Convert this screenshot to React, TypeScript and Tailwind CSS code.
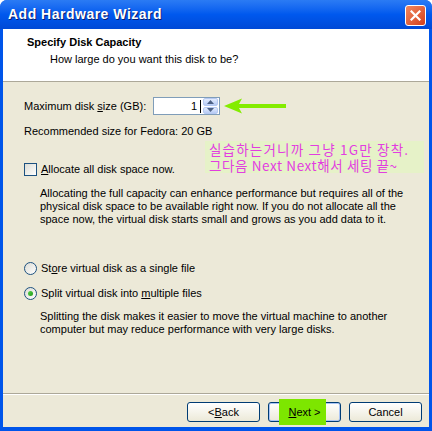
import React from "react";

function ArrowMark() {
  return (
    <svg width="66" height="16" viewBox="0 0 66 16" className="ml-[2px]">
      <path d="M2 8 L20 0.5 L17 6 L64 6 L64 10 L17 10 L20 15.5 Z" fill="#84ec00" />
    </svg>
  );
}

function Spinner() {
  return (
    <div className="flex flex-col w-[15px] h-[16px] gap-[1px] mr-[1px]">
      <div className="flex-1 flex items-center justify-center rounded-[2px] bg-gradient-to-b from-[#e3ecfd] to-[#b7cbf5] border border-[#b6c9f2]">
        <svg width="7" height="4" viewBox="0 0 7 4"><path d="M0 4 L3.5 0 L7 4 Z" fill="#4d6185" /></svg>
      </div>
      <div className="flex-1 flex items-center justify-center rounded-[2px] bg-gradient-to-b from-[#e3ecfd] to-[#b7cbf5] border border-[#b6c9f2]">
        <svg width="7" height="4" viewBox="0 0 7 4"><path d="M0 0 L3.5 4 L7 0 Z" fill="#4d6185" /></svg>
      </div>
    </div>
  );
}

function Radio({ checked }: { checked?: boolean }) {
  return (
    <div className="w-[13px] h-[13px] rounded-full border border-[#1c5180] bg-gradient-to-br from-[#dcdcd4] to-white flex items-center justify-center">
      {checked && <div className="w-[5px] h-[5px] rounded-full bg-gradient-to-br from-[#55d34a] to-[#1f9a17]" />}
    </div>
  );
}

function XpButton({ children, primary }: { children: React.ReactNode; primary?: boolean }) {
  return (
    <button
      className={
        "relative w-[73px] h-[20px] rounded-[3px] border border-[#003c74] bg-gradient-to-b from-white to-[#ece9d8] text-[11px] text-black flex items-center justify-center " +
        (primary ? "shadow-[inset_0_0_0_1px_#a9c4f5]" : "")
      }
    >
      {children}
    </button>
  );
}

export default function App() {
  return (
    <div className="w-[432px] h-[431px] flex flex-col bg-[#0055ea] rounded-t-[7px] overflow-hidden font-['Liberation_Sans',Arial,sans-serif] text-[11px] text-black">
      {/* title bar */}
      <div className="h-[29px] flex items-center justify-between pl-[8px] pr-[6px] bg-gradient-to-b from-[#2b7bf4] via-[#0058ee] to-[#0049d6]">
        <span className="text-white font-bold text-[14px] tracking-[0.5px] [text-shadow:1px_1px_0_#0a1e6e]">Add Hardware Wizard</span>
        <div className="w-[21px] h-[21px] rounded-[3px] border border-white bg-gradient-to-br from-[#f0875f] to-[#d43d16] flex items-center justify-center mt-[1px]">
          <svg width="11" height="11" viewBox="0 0 11 11">
            <path d="M1.5 1.5 L9.5 9.5 M9.5 1.5 L1.5 9.5" stroke="white" strokeWidth="2.2" strokeLinecap="square" />
          </svg>
        </div>
      </div>

      <div className="flex-1 mx-[3px] mb-[4px] bg-[#ece9d8] flex flex-col">
        {/* header */}
        <div className="h-[53px] bg-white border-b border-[#aca899] pl-[24px] pt-[7px]">
          <div className="font-bold leading-[13px]">Specify Disk Capacity</div>
          <div className="pl-[23px] mt-[4px] leading-[13px]">How large do you want this disk to be?</div>
        </div>

        {/* content */}
        <div className="relative flex-1 pl-[21px] flex flex-col">
          <div className="flex items-center mt-[15px] h-[18px]">
            <span className="w-[129px]">
              Maximum disk <span className="underline">s</span>ize (GB):
            </span>
            <div className="w-[67px] h-[18px] bg-white border border-[#7f9db9] flex items-center justify-end">
              <span className="mr-[3px] leading-[13px]">1</span>
              <span className="w-[1px] h-[13px] bg-black mr-[2px]" />
              <Spinner />
            </div>
            <ArrowMark />
          </div>

          <div className="mt-[10px] leading-[13px]">Recommended size for Fedora: 20 GB</div>

          <div className="flex items-center gap-[4px] mt-[25px] h-[13px]">
            <div className="w-[13px] h-[13px] border border-[#1c5180] bg-gradient-to-br from-[#dcdcd4] to-white" />
            <span>
              <span className="underline">A</span>llocate all disk space now.
            </span>
          </div>

          <p className="mt-[11px] ml-[16px] leading-[13px]">
            Allocating the full capacity can enhance performance but requires all of the
            <br />
            physical disk space to be available right now. If you do not allocate all the
            <br />
            space now, the virtual disk starts small and grows as you add data to it.
          </p>

          <div className="flex items-center gap-[4px] mt-[36px] h-[13px]">
            <Radio />
            <span>
              St<span className="underline">o</span>re virtual disk as a single file
            </span>
          </div>

          <div className="flex items-center gap-[4px] mt-[12px] h-[13px]">
            <Radio checked />
            <span>
              Split virtual disk into <span className="underline">m</span>ultiple files
            </span>
          </div>

          <p className="mt-[10px] ml-[16px] leading-[13px]">
            Splitting the disk makes it easier to move the virtual machine to another
            <br />
            computer but may reduce performance with very large disks.
          </p>

          {/* annotation note */}
          <div className="absolute left-[202px] top-[59px] w-[219px] h-[32px] bg-[#e6f2c8] pl-[4px] text-[#e23ee0] text-[13.5px] leading-[16px] font-['Noto_Sans_CJK_KR',sans-serif] flex flex-col">
            <div className="h-[16px] whitespace-nowrap tracking-[1.2px]">실습하는거니까 그냥 1G만 장착.</div>
            <div className="h-[16px] whitespace-nowrap tracking-[0.6px]">그다음 Next Next해서 세팅 끝~</div>
          </div>
        </div>

        {/* footer */}
        <div className="border-t border-[#aca899] shadow-[inset_0_1px_0_white] pt-[8px] pb-[5px] pr-[7px] flex justify-end gap-[8px]">
          <XpButton>
            &lt; <span className="underline">B</span>ack
          </XpButton>
          <XpButton primary>
            <span className="absolute -top-[4px] -bottom-[4px] left-[10px] right-[14px] bg-[#7de600]" />
            <span className="relative">
              <span className="underline">N</span>ext &gt;
            </span>
          </XpButton>
          <XpButton>Cancel</XpButton>
        </div>
      </div>
    </div>
  );
}
